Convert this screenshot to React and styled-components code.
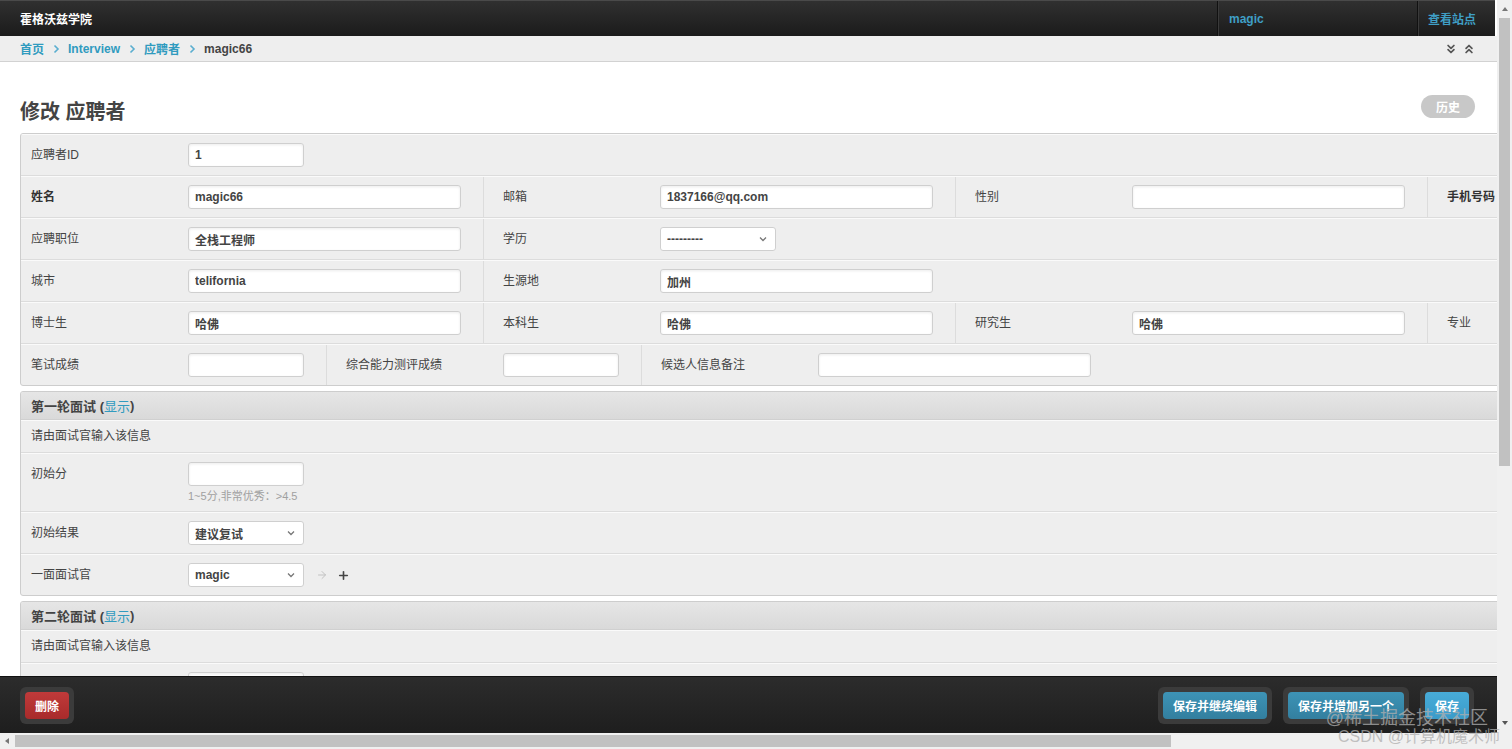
import React from "react";
import styled, { createGlobalStyle } from "styled-components";
import { ChevronsDown, ChevronsUp, ArrowRight, Plus } from "lucide-react";

const GlobalStyle = createGlobalStyle`
  html, body, #root {
    margin: 0;
    height: 100%;
    overflow: hidden;
  }
  body {
    font-family: "Liberation Sans", "Noto Sans CJK SC", sans-serif;
    font-size: 12px;
    color: #444;
  }
`;

const Frame = styled.div`
  position: relative;
  height: 100vh;
  display: grid;
  grid-template-columns: 1fr 15px;
  grid-template-rows: 1fr 16px;
`;

const Viewport = styled.div`
  display: flex;
  flex-direction: column;
  overflow: hidden;
  min-width: 0;
`;

// top bar
const Header = styled.header`
  height: 36px;
  flex: none;
  display: flex;
  align-items: stretch;
  background: linear-gradient(#303030, #1b1b1b);
  border-top: 1px solid #4a4a4a;
  box-sizing: border-box;
  margin-right: 2px;
`;

const Brand = styled.div`
  flex: 1;
  display: flex;
  align-items: center;
  padding-left: 20px;
  color: #fff;
  font-weight: bold;
  font-size: 12px;
`;

const NavItem = styled.div`
  display: flex;
  align-items: center;
  width: ${(p) => p.$width || "auto"};
  padding: 0 ${(p) => p.$padRight || 0}px 0 ${(p) => p.$padLeft || 11}px;
  border-left: 1px solid #111;
  box-shadow: inset 1px 0 0 #3a3a3a;
  box-sizing: border-box;
  color: #3f9fc6;
  font-weight: bold;
  font-size: 12px;
`;

const Breadcrumbs = styled.nav`
  height: 26px;
  flex: none;
  box-sizing: border-box;
  display: flex;
  align-items: center;
  padding: 0 21px 0 20px;
  background: #eeeeee;
  border-bottom: 1px solid #d2d2d2;
  font-weight: bold;
`;

const Crumb = styled.span`
  color: ${(p) => (p.$current ? "#444" : "#309bbf")};
`;

const CrumbSep = styled.span`
  display: inline-flex;
  margin: 0 8px 0 9px;
`;

const CollapseTools = styled.div`
  margin-left: auto;
  display: flex;
  gap: 4px;
  color: #555;
`;

const Scroller = styled.main`
  flex: 1;
  overflow: hidden;
  min-height: 0;
`;

const TitleRow = styled.div`
  display: flex;
  justify-content: space-between;
  align-items: flex-start;
  padding: 33px 22px 0 20px;
  margin-bottom: 9px;
`;

const Title = styled.h1`
  margin: 5px 0 0;
  font-size: 20px;
  line-height: 24px;
  font-weight: bold;
  color: #444;
`;

const HistoryButton = styled.span`
  display: inline-flex;
  align-items: center;
  justify-content: center;
  width: 54px;
  height: 23px;
  border-radius: 12px;
  background: #c8c8c8;
  color: #fff;
  font-weight: bold;
  font-size: 12px;
`;

const Form = styled.div`
  width: 2000px;
  padding-left: 20px;
  display: flex;
  flex-direction: column;
  gap: 5px;
`;

const Module = styled.section`
  border: 1px solid #cdcdcd;
  border-radius: 3px;
  background: #eeeeee;
  overflow: hidden;
`;

const ModuleTitle = styled.h2`
  margin: 0;
  height: 28px;
  box-sizing: border-box;
  padding: 0 10px;
  display: flex;
  align-items: center;
  font-size: 13px;
  font-weight: bold;
  color: #444;
  background: linear-gradient(#e6e6e6, #d9d9d9);
  border-bottom: 1px solid #d0d0d0;
`;

const ShowLink = styled.span`
  color: #309bbf;
  font-weight: normal;
`;

const Row = styled.div`
  display: flex;
  align-items: stretch;
  padding-left: 10px;
  border-top: 1px solid #fafafa;
  border-bottom: 1px solid #dcdcdc;

  &:last-child {
    border-bottom: none;
  }
`;

const Description = styled.div`
  padding: 8px 10px 9px;
  line-height: 14px;
  border-top: 1px solid #fafafa;
  border-bottom: 1px solid #dcdcdc;
`;

const FieldBox = styled.div`
  display: flex;
  align-items: flex-start;
  padding: 8px 22px 8px 0;

  & + & {
    border-left: 1px solid #dcdcdc;
    padding-left: 19px;
  }
`;

const Label = styled.label`
  width: 157px;
  flex: none;
  line-height: 24px;
  font-weight: ${(p) => (p.$required ? "bold" : "normal")};
  color: ${(p) => (p.$required ? "#333" : "#444")};
`;

const Control = styled.div`
  display: flex;
  flex-direction: column;
`;

const Input = styled.input`
  width: ${(p) => (p.$small ? 116 : 273)}px;
  height: 24px;
  box-sizing: border-box;
  margin: 0;
  padding: 0 6px;
  border: 1px solid #cfcfcf;
  border-radius: 3px;
  background: #fff;
  box-shadow: inset 0 1px 3px #ececec;
  font-family: "Liberation Sans", "Noto Sans CJK SC", sans-serif;
  font-size: 12px;
  font-weight: bold;
  color: #444;
  outline: none;
`;

const Help = styled.div`
  margin-top: 3px;
  font-size: 11px;
  line-height: 14px;
  color: #a0a0a0;
`;

const Select = styled.div`
  width: 116px;
  height: 24px;
  box-sizing: border-box;
  padding: 0 8px 0 6px;
  display: flex;
  align-items: center;
  justify-content: space-between;
  border: 1px solid #cfcfcf;
  border-radius: 3px;
  background: #fff;
  font-weight: bold;
  color: #444;
`;

const RelatedTools = styled.div`
  display: flex;
  align-items: center;
  gap: 9px;
  height: 24px;
  margin-left: 12px;
`;

const SubmitRow = styled.footer`
  height: 57px;
  flex: none;
  box-sizing: border-box;
  display: flex;
  align-items: center;
  padding: 0 23px 0 20px;
  background: linear-gradient(#2c2c2c, #1e1e1e);
  border-top: 1px solid #111;
`;

const ButtonGroup = styled.div`
  display: flex;
  gap: 11px;
  margin-left: ${(p) => (p.$right ? "auto" : 0)};
`;

const Well = styled.div`
  padding: 5px;
  border-radius: 6px;
  background: #3b3b3b;
`;

const Button = styled.span`
  display: flex;
  align-items: center;
  height: 27px;
  padding: 0 10px;
  border-radius: 4px;
  color: #fff;
  font-weight: bold;
  font-size: 12px;
  background: ${(p) =>
    p.$variant === "delete"
      ? "linear-gradient(#c03a3a, #a82b2b)"
      : p.$variant === "default"
      ? "linear-gradient(#48acd9, #3a9bc9)"
      : "linear-gradient(#3d93b6, #337f9f)"};
`;

const VScroll = styled.div`
  grid-row: 1;
  grid-column: 2;
  background: #f0f0f0;
  display: flex;
  flex-direction: column;
  align-items: center;
`;

const HScroll = styled.div`
  grid-row: 2;
  grid-column: 1;
  background: #f0f0f0;
  display: flex;
  align-items: center;
`;

const Corner = styled.div`
  grid-row: 2;
  grid-column: 2;
  background: #f0f0f0;
`;

const Arrow = styled.span`
  flex: none;
  width: 0;
  height: 0;
  border: 3.5px solid transparent;
  ${(p) => p.$dir === "up" && "border-bottom: 4px solid #777; margin: 4px 0 7px;"}
  ${(p) => p.$dir === "down" && "border-top: 4px solid #555; margin: auto 0 5px;"}
  ${(p) => p.$dir === "left" && "border-right: 4px solid #777; margin: 0 6px 0 2px;"}
`;

const VThumb = styled.div`
  width: 11px;
  height: 448px;
  background: #c1c1c1;
`;

const HThumb = styled.div`
  width: 1156px;
  height: 12px;
  background: #c1c1c1;
`;

const Watermark = styled.div`
  position: absolute;
  right: 12px;
  bottom: 3px;
  display: flex;
  flex-direction: column;
  align-items: flex-end;
  color: rgba(175, 175, 175, 0.75);
  pointer-events: none;
  line-height: 1.1;
`;

const WatermarkLine = styled.span`
  font-size: ${(p) => p.$size}px;
  margin-right: ${(p) => p.$shift || 0}px;
`;

const Chevron = () => (
  <svg width="7" height="10" viewBox="0 0 7 10">
    <polyline points="1.5,1.5 5,5 1.5,8.5" fill="none" stroke="#5aaed0" strokeWidth="1.6" />
  </svg>
);

const SelectCaret = () => (
  <svg width="8" height="6" viewBox="0 0 8 6">
    <polyline points="1,1.5 4,4.5 7,1.5" fill="none" stroke="#777" strokeWidth="1.3" />
  </svg>
);

function Field({ label, value, small, required }) {
  return (
    <FieldBox>
      <Label $required={required}>{label}</Label>
      <Input readOnly $small={small} defaultValue={value || ""} />
    </FieldBox>
  );
}

function SelectField({ label, value, children }) {
  return (
    <FieldBox>
      <Label>{label}</Label>
      <Select>
        <span>{value}</span>
        <SelectCaret />
      </Select>
      {children}
    </FieldBox>
  );
}

function InterviewModule({ title, extra }) {
  return (
    <Module>
      <ModuleTitle>
        {title}&nbsp;(<ShowLink>显示</ShowLink>)
      </ModuleTitle>
      <Description>请由面试官输入该信息</Description>
      <Row>
        <FieldBox>
          <Label>初始分</Label>
          <Control>
            <Input readOnly $small defaultValue="" />
            <Help>1~5分,非常优秀：&gt;4.5</Help>
          </Control>
        </FieldBox>
      </Row>
      {extra}
    </Module>
  );
}

export default function App() {
  return (
    <>
      <GlobalStyle />
      <Frame>
        <Viewport>
          <Header>
            <Brand>霍格沃兹学院</Brand>
            <NavItem $width="200px">magic</NavItem>
            <NavItem $padLeft={10} $padRight={19}>查看站点</NavItem>
          </Header>
          <Breadcrumbs>
            <Crumb>首页</Crumb>
            <CrumbSep><Chevron /></CrumbSep>
            <Crumb>Interview</Crumb>
            <CrumbSep><Chevron /></CrumbSep>
            <Crumb>应聘者</Crumb>
            <CrumbSep><Chevron /></CrumbSep>
            <Crumb $current>magic66</Crumb>
            <CollapseTools>
              <ChevronsDown size={14} strokeWidth={3} />
              <ChevronsUp size={14} strokeWidth={3} />
            </CollapseTools>
          </Breadcrumbs>

          <Scroller>
            <TitleRow>
              <Title>修改 应聘者</Title>
              <HistoryButton>历史</HistoryButton>
            </TitleRow>
            <Form>
              <Module>
                <Row>
                  <Field label="应聘者ID" value="1" small />
                </Row>
                <Row>
                  <Field label="姓名" value="magic66" required />
                  <Field label="邮箱" value="1837166@qq.com" />
                  <Field label="性别" value="" />
                  <Field label="手机号码" value="" required />
                </Row>
                <Row>
                  <Field label="应聘职位" value="全栈工程师" />
                  <SelectField label="学历" value="---------" />
                </Row>
                <Row>
                  <Field label="城市" value="telifornia" />
                  <Field label="生源地" value="加州" />
                </Row>
                <Row>
                  <Field label="博士生" value="哈佛" />
                  <Field label="本科生" value="哈佛" />
                  <Field label="研究生" value="哈佛" />
                  <Field label="专业" value="" />
                </Row>
                <Row>
                  <Field label="笔试成绩" small />
                  <Field label="综合能力测评成绩" small />
                  <Field label="候选人信息备注" />
                </Row>
              </Module>

              <InterviewModule
                title="第一轮面试"
                extra={
                  <>
                    <Row>
                      <SelectField label="初始结果" value="建议复试" />
                    </Row>
                    <Row>
                      <SelectField label="一面面试官" value="magic">
                        <RelatedTools>
                          <ArrowRight size={12} color="#c2c2c2" strokeWidth={2} />
                          <Plus size={13} color="#444" strokeWidth={3} />
                        </RelatedTools>
                      </SelectField>
                    </Row>
                  </>
                }
              />
              <InterviewModule title="第二轮面试" />
            </Form>
          </Scroller>

          <SubmitRow>
            <ButtonGroup>
              <Well>
                <Button $variant="delete">删除</Button>
              </Well>
            </ButtonGroup>
            <ButtonGroup $right>
              <Well>
                <Button>保存并继续编辑</Button>
              </Well>
              <Well>
                <Button>保存并增加另一个</Button>
              </Well>
              <Well>
                <Button $variant="default">保存</Button>
              </Well>
            </ButtonGroup>
          </SubmitRow>
        </Viewport>

        <VScroll>
          <Arrow $dir="up" />
          <VThumb />
          <Arrow $dir="down" />
        </VScroll>
        <HScroll>
          <Arrow $dir="left" />
          <HThumb />
        </HScroll>
        <Corner />

        <Watermark>
          <WatermarkLine $size={18} $shift={12}>@稀土掘金技术社区</WatermarkLine>
          <WatermarkLine $size={16}>CSDN @计算机魔术师</WatermarkLine>
        </Watermark>
      </Frame>
    </>
  );
}
